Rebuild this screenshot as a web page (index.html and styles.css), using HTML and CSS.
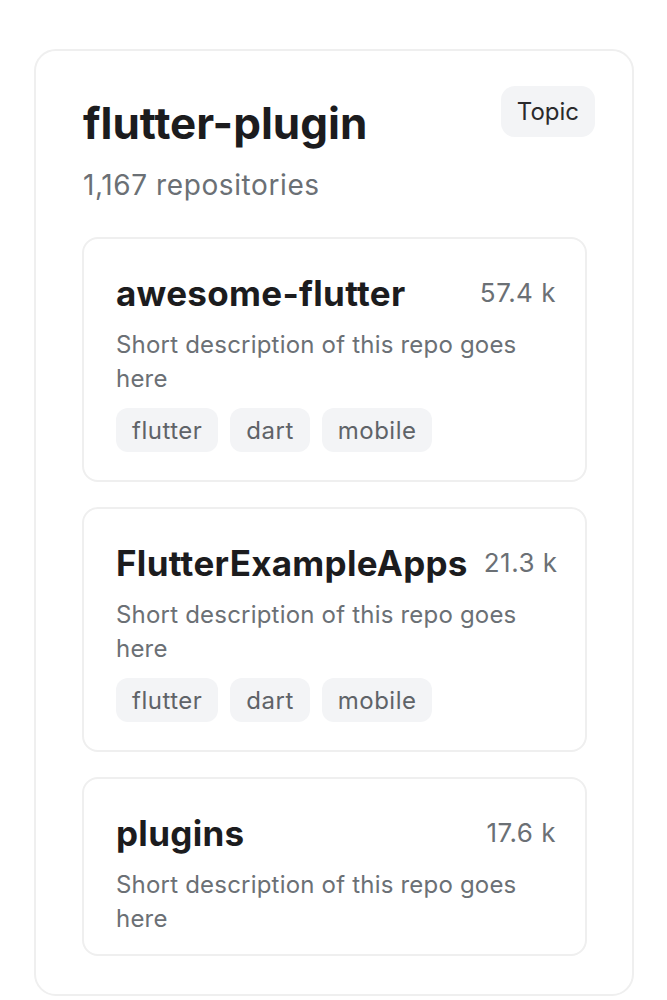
FILE: index.html
```html
<!DOCTYPE html>
<html lang="en">
<head>
<meta charset="utf-8">
<title>flutter-plugin</title>
<link rel="stylesheet" href="styles.css">
</head>
<body>
<main class="page">
  <section class="topic-card">
    <header class="topic-header">
      <div class="topic-heading">
        <h1 class="topic-title">flutter-plugin</h1>
        <p class="topic-count">1,167 repositories</p>
      </div>
      <span class="topic-badge">Topic</span>
    </header>
    <div class="repo-list">
      <article class="repo-card">
        <div class="repo-top">
          <h2 class="repo-name">awesome-flutter</h2>
          <span class="repo-stars">57.4 k</span>
        </div>
        <p class="repo-desc">Short description of this repo goes here</p>
        <div class="repo-tags">
          <span class="tag">flutter</span>
          <span class="tag">dart</span>
          <span class="tag">mobile</span>
        </div>
      </article>
      <article class="repo-card">
        <div class="repo-top">
          <h2 class="repo-name">FlutterExampleApps</h2>
          <span class="repo-stars">21.3 k</span>
        </div>
        <p class="repo-desc">Short description of this repo goes here</p>
        <div class="repo-tags">
          <span class="tag">flutter</span>
          <span class="tag">dart</span>
          <span class="tag">mobile</span>
        </div>
      </article>
      <article class="repo-card">
        <div class="repo-top">
          <h2 class="repo-name">plugins</h2>
          <span class="repo-stars">17.6 k</span>
        </div>
        <p class="repo-desc">Short description of this repo goes here</p>
      </article>
    </div>
  </section>
</main>
</body>
</html>
```

FILE: styles.css
```css
* { box-sizing: border-box; }

html, body {
  margin: 0;
  padding: 0;
  background: #ffffff;
}

body {
  font-family: Inter, "Noto Sans", "Liberation Sans", sans-serif;
  color: #1c1c1e;
}

.page {
  padding: 49px 33px 0 34px;
}

.topic-card {
  width: 600px;
  border: 2px solid #efefef;
  border-radius: 22px;
  padding: 35px 37px 38px 47px;
}

.topic-header {
  display: flex;
  justify-content: space-between;
  align-items: flex-start;
}

.topic-title {
  margin: 11px 0 0;
  font-size: 44px;
  line-height: 52px;
  font-weight: 700;
  color: #1c1c1e;
}

.topic-count {
  margin: 19px 0 0;
  font-size: 28px;
  line-height: 34px;
  font-weight: 400;
  letter-spacing: 0.6px;
  color: #6b7075;
}

.topic-badge {
  background: #f3f4f6;
  border-radius: 14px;
  padding: 11px 16px;
  font-size: 24px;
  line-height: 29px;
  color: #2a2a2c;
}

.repo-list {
  display: flex;
  flex-direction: column;
  gap: 25px;
  margin: 35px 8px 0 -1px;
}

.repo-card {
  border: 2px solid #efefef;
  border-radius: 16px;
  padding: 34px 29px 18px 32px;
}

.repo-top {
  display: flex;
  justify-content: space-between;
  align-items: flex-start;
  gap: 16px;
}

.repo-name {
  margin: 0;
  font-size: 35px;
  line-height: 40px;
  font-weight: 700;
  letter-spacing: 0.3px;
  color: #1c1c1e;
}

.repo-stars {
  margin-top: 4px;
  font-size: 26px;
  line-height: 32px;
  letter-spacing: 0.5px;
  color: #6b7075;
  white-space: nowrap;
}

.repo-desc {
  margin: 15px 0 0;
  font-size: 24px;
  line-height: 34px;
  letter-spacing: 0.2px;
  color: #6b7075;
}

.repo-tags {
  display: flex;
  gap: 12px;
  margin: 12px 0 10px;
}

.tag {
  background: #f3f4f6;
  border-radius: 12px;
  padding: 7.5px 16px;
  font-size: 24px;
  line-height: 29px;
  letter-spacing: 0.5px;
  color: #5f6368;
}
```
